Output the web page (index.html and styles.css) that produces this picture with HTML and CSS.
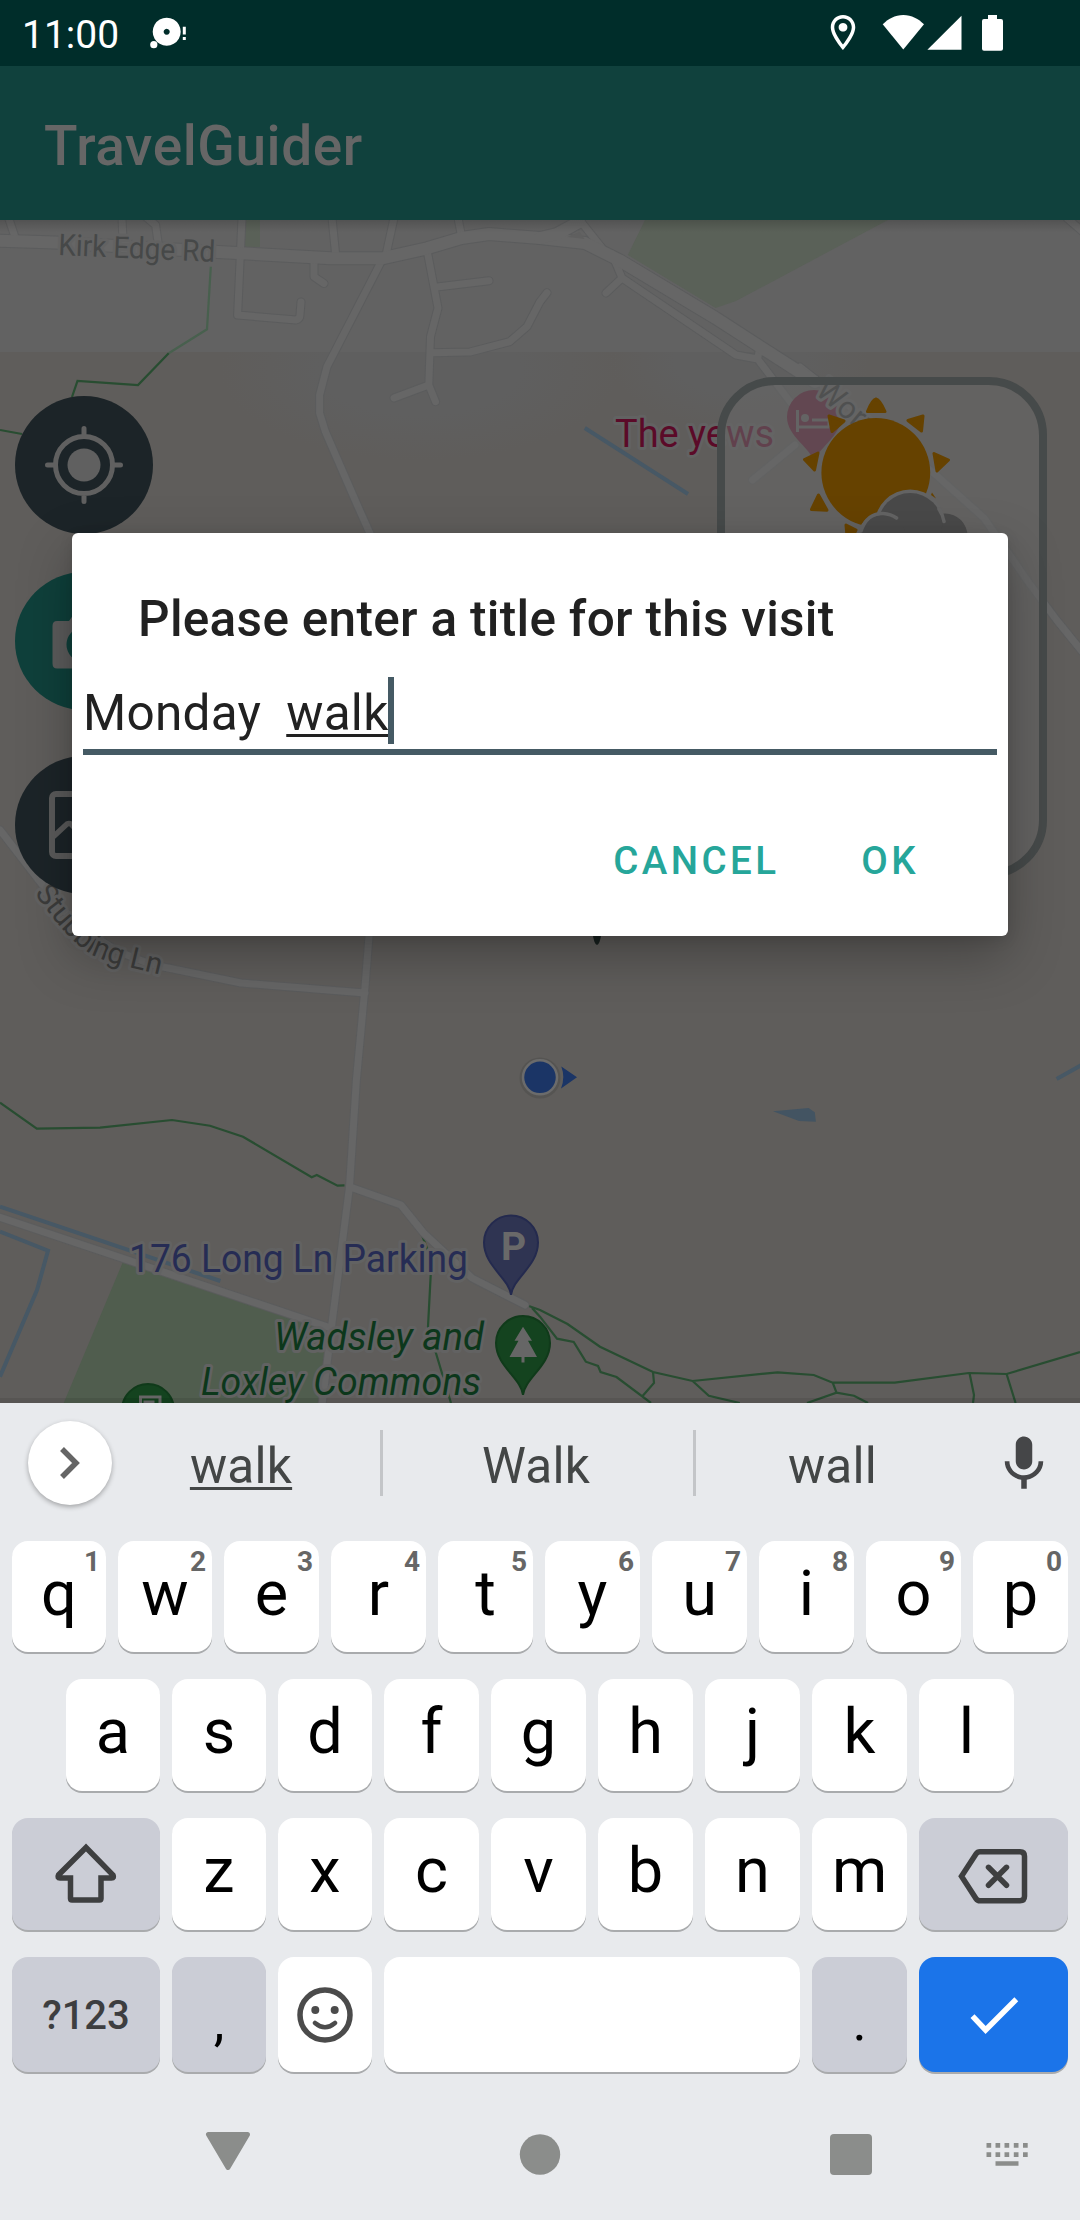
FILE: index.html
```html
<!DOCTYPE html>
<html lang="en">
<head>
<meta charset="utf-8">
<title>TravelGuider</title>
<link rel="stylesheet" href="styles.css">
</head>
<body>
<div class="screen">
  <header class="status">
    <span class="clock">11:00</span>
    <svg class="notif" width="38" height="34" viewBox="149 16 38 34">
      <path fill-rule="evenodd" d="M166.7 17.7a14 14 0 1 0 .01 0zM166.7 28.7a3 3 0 1 1-.01 0z"/>
      <circle cx="153.8" cy="44.7" r="3.6"/>
      <path d="M182.8 26.7h3v7.8h-3zM182.8 37h3v3h-3z"/>
    </svg>
    <svg class="system" width="186" height="40" viewBox="820 13 186 40">
      <path transform="translate(822 11.5) scale(1.75)" fill-rule="evenodd" d="M12 2C8.13 2 5 5.13 5 9c0 5.25 7 13 7 13s7-7.75 7-13c0-3.87-3.13-7-7-7zM7 9c0-2.76 2.24-5 5-5s5 2.24 5 5c0 2.88-2.88 7.19-5 9.88C9.92 16.21 7 11.85 7 9zM12 6.5a2.5 2.5 0 1 0 .01 0z"/>
      <path d="M903.3 49.4 882.7 24.3C888 19 895 15 903.3 15s15.300 4 20.700 9.300z"/>
      <path d="M927.4 49.700H961.500V15.700z"/>
      <path d="M988 15h9v4h4q2 0 2 2v27.700q0 2-2 2h-17q-2 0-2-2V21q0-2 2-2h4z"/>
    </svg>
  </header>
  <div class="appbar">TravelGuider</div>

  <main class="map">
    <svg class="tiles" width="1080" height="1183" viewBox="0 220 1080 1183">
      <defs>
        <linearGradient id="barShade" x1="0" y1="0" x2="0" y2="1">
          <stop offset="0" stop-color="#000" stop-opacity=".16"/>
          <stop offset="1" stop-color="#000" stop-opacity="0"/>
        </linearGradient>
        <radialGradient id="town"><stop offset=".5" stop-color="#5f5f5f"/><stop offset="1" stop-color="#5f5f5f" stop-opacity="0"/></radialGradient>
        <g id="minor">
          <path d="M8.600 218 15 237M122 218l1 22M146 217l9.600 8L158 242M242 218l-4.400 97L296 320q4-1 4-5l1-13M332 218l4 40M394 218l-8 37M458 218l3.500 18M314 263v13.700l10 6.800"/>
          <path d="M427 250 438 308l-7.500 28.700L428.800 385l6.800 16.700M428.800 385 394 398M437 287l52-6.300M432 352.700l38-.7 39.700-10.300L527 326.700l13-25 7-9"/>
          <path d="M578 218l24 30M612 254l10 24-16 15M622 278 736 355l21.600 4 2.400-12M757.600 359 791 403M795 445l-42.500 35M1067 218l16 14"/>
          <path d="M382 260 327 366.700l-7.400 28.300v18l5.800 18.700L358 506.700 372 538"/>
          <path d="M0 830 41 883Q90 950 162 966.700L241 983l124 10M369.500 930 365 987l-8.600 93-6.900 106.700L332 1323l-10 82M349.500 1186.700l51.500 18.300 22.600 28L472 1278l53 27M0 1217.300l327 109.400"/>
          <path d="M800 367 936 475l48 43 45 65 27.600 37L1085 655"/>
        </g>
        <g id="major">
          <path d="M0 240.700l55 1.800 158.500 9.200 117.100 6.600H382l45-10 34.500-10.300L489 234l51 4 45 5 34 17 96.600 58 44.400 28.700L815 382"/>
          <path d="M540 238l17-4 22-12"/>
        </g>
      </defs>
      <rect y="220" width="1080" height="132" fill="#626262"/>
      <rect y="352" width="1080" height="1051" fill="#5f5d5b"/>
      <svg y="352" width="1080" height="183" viewBox="0 352 1080 183">
        <ellipse cx="420" cy="370" rx="200" ry="90" fill="url(#town)"/>
        <ellipse cx="740" cy="360" rx="130" ry="70" fill="url(#town)"/>
      </svg>
      <g class="park">
        <path d="M645 220 627.800 255l87.800 53 20.400-7L888 220z"/>
        <path d="M245 220h15v27h-15z"/>
      </g>
      <path class="field" d="M123 1261.700 329 1326.700 318.500 1403H63.700z"/>
      <path class="pond" d="M773 1111.300l35.600-3.300 6.200 4.300 1.100 9.400-16.900-.7z"/>
      <g class="trail">
        <path class="faint" d="M210.800 266.700 207 329.300l-38.300 24"/>
        <path d="M168.700 353.300 138 385l-60.500-4-5.500 16M22 434l-22-4M0 1102.700l36.800 26 63.200-1 72-7.700 38 5.700 33 11 68.700 40.600 5.100-2.300 20.700 10.700 7-.4M422 1235l9.500 25-3.500 66.700L451 1403M526 1305l14 5 27.500 14 32.500 22.700L653 1372l39.600 9 85-8.700 36.200 2.700 18.900 7.700h62l74.100-9.700 37.800 1 73.400-22M532 1308l8 8.700 17 22 16.700 3.300 12.100 19.700 12.200 4.300 2.600 6 15.900 5L651 1403M653 1372l1 11-11.400 13M692.600 1381l16.200 14.700 31 7.300M832.700 1382.700l3.800 10M807 1403l29.500-10.300 17.500 3 14 7.300M969.500 1373l4.500 22-1 8M1006.600 1374l9 29"/>
      </g>
      <g class="stream">
        <path d="M584.800 428 688 494M0 1206.700 220.400 1281M0 1231.700l48 19-11 39.300-37 86.700M1056.600 1079l25-14"/>
      </g>
      <use href="#minor" class="casing"/><use href="#major" class="casing wide"/>
      <use href="#minor" class="road"/><use href="#major" class="road wide"/>
      <path d="M567.500 237l12-5 5 7z" fill="#5f5f5f"/>

      <path d="M814 463C812 448 787 437 787 417a27 27 0 0 1 54 0C841 437 817 448 814 463z" fill="#5c1a33"/>
      <path d="M797.500 410v22M797.500 427h32M812 420h17v7" fill="none" stroke="#626262" stroke-width="3"/><circle cx="805" cy="418" r="4" fill="#626262"/>
      <g class="label">
        <text x="58" y="255" transform="rotate(2.500 58 255)" font-size="30" textLength="157" lengthAdjust="spacingAndGlyphs" fill="#464848">Kirk Edge Rd</text>
        <path id="stub" d="M34 893C54 920 70 941 92 955 112 965 140 969 185 981" fill="none" stroke="none"/>
        <text font-size="29.500" fill="#3c3c3b"><textPath href="#stub">Stubbing Ln</textPath></text>
        <text x="814" y="393" transform="rotate(40 814 393)" font-size="31" fill="#2e3131">Worr</text>
        <text x="615" y="446.700" font-size="39.500" textLength="159" lengthAdjust="spacingAndGlyphs" fill="#5b0a28">The yews</text>
        <text x="129" y="1272.300" font-size="39.500" textLength="339" lengthAdjust="spacingAndGlyphs" fill="#262c54">176 Long Ln Parking</text>
        <g font-style="italic" font-size="39.500" fill="#0c371b">
          <text x="274" y="1350" textLength="210" lengthAdjust="spacingAndGlyphs">Wadsley and</text>
          <text x="201" y="1395" textLength="280" lengthAdjust="spacingAndGlyphs">Loxley Commons</text>
        </g>
      </g>
      <path d="M511 1295C509 1278 484 1266 484 1242.500a27 27 0 0 1 54 0C538 1266 513 1278 511 1295z" fill="#2f3452" stroke="#242a4e" stroke-width="2"/>
      <text x="513.500" y="1259.500" font-size="39" font-weight="700" text-anchor="middle" fill="#696969">P</text>
      <g fill="#14431f" stroke="#103a1a" stroke-width="2">
        <path d="M523 1395C521 1378 496 1366 496 1343a27 27 0 0 1 54 0C550 1366 525 1378 523 1395z"/>
        <circle cx="148" cy="1410" r="26"/>
      </g>
      <path d="M523 1326.700l9 14h-4l9 16.300H524.500v5.500h-3V1357H509.500l9-16.300h-4z" fill="#666"/>
      <path d="M140.500 1403v-6H160v6M145 1404v-2h8v2" fill="none" stroke="#666" stroke-width="3"/>

      <circle cx="540" cy="1078" r="20.500" fill="#555452"/>
      <circle cx="540" cy="1077.300" r="17" fill="#1b3566" stroke="#6b6b6b" stroke-width="2.500"/>
      <path d="M561.300 1066.500 577 1077.300 561 1088.500Q565.500 1077.300 561.300 1066.500z" fill="#1b3566"/>
      <path d="M592.700 934h8.600Q600 944 597 945 594 944 592.700 934z" fill="#18211f"/>
      <rect y="220" width="1080" height="12" fill="url(#barShade)"/>
      <rect y="1398" width="1080" height="5" fill="#000" opacity=".08"/>
    </svg>

    <div class="weather">
      <svg width="314" height="180" viewBox="725 385 314 180">
        <g fill="#664200" stroke="#664200" stroke-width="3" stroke-linejoin="round">
          <path d="M867.500 411.500h17.500Q880 400 876 399 872 400 867.500 411.500zM908 420.500l15-4.500-1.500 15zM829 416l15 5-12 10.500zM818 453l-13.500 6.500 10 10.500zM934 453.500l14.500 6.500-11.500 11zM818.500 495l-7 14.500 15.500.7zM846 525l10 5-3 6h-6z"/>
        </g>
        <path d="M932 492.500l4 6-5-3.500z" fill="#664200"/>
        <circle cx="875.800" cy="472.500" r="54.400" fill="#664200"/>
        <circle cx="883" cy="538" r="25.500" fill="#636363"/>
        <circle cx="910.200" cy="525" r="35.500" fill="#636363"/>
        <g fill="#494949"><circle cx="945" cy="536" r="22.500"/><circle cx="910.200" cy="525" r="32"/><circle cx="883" cy="538" r="23"/></g>
        <path d="M861 531Q867 513 883 513.500q8 .5 13.500 4.500M939 509q4 6 5 12.500" fill="none" stroke="#636363" stroke-width="3.600" stroke-linecap="round"/>
      </svg>
    </div>

    <div class="fabs">
      <div class="fab"><svg width="84" height="84" viewBox="-42 -42 84 84"><circle r="16.500" fill="#606060"/><path d="M28.500 0a28.500 28.500 0 1 1-57 0a28.500 28.500 0 1 1 57 0M0-36.500v8M0 36.500v-8M-36.500 0h8M36.500 0h-8" fill="none" stroke="#606060" stroke-width="5" stroke-linecap="round"/></svg></div>
      <div class="fab teal"><svg width="84" height="84" viewBox="-42 -42 84 84"><path fill="#5c5c5c" fill-rule="evenodd" d="M-27-20h12l5-7h20l5 7h12q4.500 0 4.500 5v37.500q0 5-4.500 5h-54q-4.500 0-4.500-5V-15q0-5 4.500-5zM0-14a17.500 17.500 0 1 0 .01 0z"/></svg></div>
      <div class="fab"><svg width="84" height="84" viewBox="-42 -42 84 84"><rect x="-32" y="-31" width="64" height="62" rx="4" fill="none" stroke="#5a5a5a" stroke-width="6"/><path d="M-31 12-17-1q2-1 4 0L15 28" fill="none" stroke="#5a5a5a" stroke-width="5.500"/></svg></div>
    </div>

    <section class="dialog">
      <h1>Please enter a title for this visit</h1>
      <div class="field-input"><span>Monday  <u>walk</u></span><i class="caret"></i></div>
      <div class="actions"><span>CANCEL</span><span>OK</span></div>
    </section>
  </main>

  <section class="keyboard">
    <div class="suggest">
      <div class="more"><svg width="24" height="36" viewBox="0 0 24 36"><path d="M4 4l14 14L4 32" fill="none" stroke="#656565" stroke-width="5.500"/></svg></div>
      <span class="word"><u>walk</u></span><i class="bar"></i>
      <span class="word">Walk</span><i class="bar"></i>
      <span class="word">wall</span>
      <svg class="mic" width="66" height="66" viewBox="0 0 24 24"><path d="M12 14c1.660 0 3-1.340 3-3V5c0-1.660-1.340-3-3-3S9 3.340 9 5v6c0 1.660 1.340 3 3 3zM17.300 11c0 3-2.540 5.100-5.300 5.100S6.700 14 6.700 11H5c0 3.410 2.720 6.230 6 6.720V21h2v-3.280c3.280-.48 6-3.300 6-6.720z"/></svg>
    </div>
    <div class="row first">
      <div class="key thin">q<sup>1</sup></div><div class="key thin">w<sup>2</sup></div><div class="key">e<sup>3</sup></div><div class="key">r<sup>4</sup></div><div class="key">t<sup>5</sup></div><div class="key">y<sup>6</sup></div><div class="key">u<sup>7</sup></div><div class="key">i<sup>8</sup></div><div class="key">o<sup>9</sup></div><div class="key">p<sup>0</sup></div>
    </div>
    <div class="row second">
      <div class="key thin">a</div><div class="key thin">s</div><div class="key thin">d</div><div class="key">f</div><div class="key">g</div><div class="key">h</div><div class="key">j</div><div class="key">k</div><div class="key">l</div>
    </div>
    <div class="row">
      <div class="key side"><svg width="66" height="66" viewBox="0 0 66 66"><path d="M33 6.500 5.500 34q-1.500 3 1.500 3H17.500V57.500q0 1.500 1.500 1.500H46.500q1.500 0 1.500-1.500V37H58.500q3 0 1.500-3z" fill="none" stroke="#3e3f40" stroke-width="5.500"/></svg></div>
      <div class="key thin">z</div><div class="key thin">x</div><div class="key">c</div><div class="key">v</div><div class="key">b</div><div class="key">n</div><div class="key">m</div>
      <div class="key side end"><svg width="80" height="66" viewBox="0 0 80 66"><path d="M7.500 35.300 22 13q1.500-2.200 4-2.200H66q4.500 0 4.500 4.500v40q0 4.500-4.500 4.500H26q-2.500 0-4-2.200zM34.500 26.300l18 18M52.500 26.300l-18 18" fill="none" stroke="#3e3f40" stroke-width="5.500" stroke-linecap="round"/></svg></div>
    </div>
    <div class="row last">
      <div class="key side sym">?123</div>
      <div class="key thin gray punct">,</div>
      <div class="key thin"><svg width="58" height="58" viewBox="-29 -29 58 58"><g fill="none" stroke="#4b4b4b" stroke-linecap="round"><circle r="25" stroke-width="5.500"/><path d="M-10 8q10 8.500 20 0" stroke-width="4.500"/></g><circle cx="-9.700" cy="-5" r="4" fill="#4b4b4b"/><circle cx="9.700" cy="-5" r="4" fill="#4b4b4b"/></svg></div>
      <div class="key space"></div>
      <div class="key gray punct">.</div>
      <div class="key side end enter"><svg width="56" height="44" viewBox="965 1992 56 44"><path d="M971.500 2015.200 984.600 2029 1015.300 1998.300" fill="none" stroke="#fff" stroke-width="5.500"/></svg></div>
    </div>
  </section>
  <nav class="nav">
    <svg width="46" height="41" viewBox="0 0 46 41"><path d="M3.500 3.500h39L23 36.500z" stroke="#8b8d8b" stroke-width="5" stroke-linejoin="round"/></svg>
    <svg width="42" height="41" viewBox="0 0 42 41"><circle cx="21" cy="20.500" r="20.200"/></svg>
    <svg width="42" height="41" viewBox="0 0 42 41"><rect width="42" height="41" rx="4"/></svg>
    <svg width="43" height="24" viewBox="985.500 2143 43 24"><path d="M986 2143h4.700v4.700h-4.700zM995 2143h4.700v4.700h-4.700zM1004 2143h4.700v4.700h-4.700zM1013.300 2143h4.700v4.700h-4.700zM1022.500 2143h4.700v4.700h-4.700zM986 2152.300h4.700v4.700h-4.700zM995 2152.300h4.700v4.700h-4.700zM1004 2152.300h4.700v4.700h-4.700zM1013.300 2152.300h4.700v4.700h-4.700zM1022.500 2152.300h4.700v4.700h-4.700zM995 2161.300h23v4.500h-23z"/></svg>
  </nav>
</div>
</body>
</html>
```
FILE: styles.css
```css
* { box-sizing: border-box; }
body { margin: 0; font-family: Roboto, "Liberation Sans", sans-serif; }
svg { display: block; flex: none; }

.screen {
  width: 1080px;
  height: 2220px;
  display: flex;
  flex-direction: column;
  overflow: hidden;
  background: #e8eaed;
}

.status {
  height: 66px;
  display: flex;
  align-items: flex-start;
  background: #002d2a;
  color: #fff;
}
.status svg { fill: #fff; }
.clock { width: 149px; padding-left: 22px; font-size: 39px; line-height: 70px; }
.notif { margin-top: 16px; }
.system { margin: 13px 74px 0 auto; }

.appbar {
  height: 154px;
  padding-left: 44px;
  background: #10413d;
  color: #666;
  font-size: 55px;
  font-weight: 500;
  letter-spacing: .6px;
  line-height: 154px;
  padding-top: 3px;
}

.map { position: relative; height: 1183px; flex: none; }
.park { fill: #5a6158; }
.field { fill: #505d4e; }
.pond { fill: #435462; }
.trail { fill: none; stroke: #284d31; stroke-width: 2.2; }
.trail .faint { stroke: #48604e; }
.stream { fill: none; stroke: #475865; stroke-width: 4; }
.casing, .road { fill: none; stroke-linejoin: round; stroke-linecap: round; }
.casing { stroke: #5b5c5d; stroke-width: 9px; }
.casing.wide { stroke-width: 14px; }
.road { stroke: #666; stroke-width: 7px; }
.road.wide { stroke-width: 12px; }
.label text { paint-order: stroke; stroke: #626262; stroke-width: 6px; stroke-linejoin: round; }

.weather {
  position: absolute;
  left: 717px;
  top: 157px;
  width: 330px;
  height: 501px;
  border: 8px solid #464a4a;
  border-radius: 58px;
  background: rgba(102, 102, 102, .6);
  background-clip: padding-box;
}

.fabs {
  position: absolute;
  left: 15px;
  top: 176px;
  display: flex;
  flex-direction: column;
}
.fab {
  width: 138px;
  height: 138px;
  border-radius: 50%;
  display: flex;
  align-items: center;
  justify-content: center;
  background: #1c2428;
}
.fab.teal { margin: 38px 0 46px; background: #0f403b; }

.dialog {
  position: absolute;
  left: 72px;
  top: 313px;
  width: 936px;
  height: 403px;
  padding: 56px 11px 0;
  border-radius: 6px;
  background: #fff;
  color: #212121;
  box-shadow: 0 20px 54px rgba(0, 0, 0, .28), 0 4px 14px rgba(0, 0, 0, .1);
}
.dialog h1 {
  margin: 0;
  padding-left: 55px;
  font-size: 49.5px;
  font-weight: 500;
  letter-spacing: .3px;
  line-height: 60px;
}
.field-input {
  display: flex;
  height: 106px;
  padding-top: 28px;
  border-bottom: 6px solid #455a64;
  font-size: 49.5px;
  letter-spacing: .25px;
  line-height: 72px;
  white-space: pre;
}
u { text-decoration: underline; text-decoration-thickness: 2.5px; text-underline-offset: 4px; text-decoration-skip-ink: none; }
.caret { width: 6px; height: 67px; margin-left: -1px; background: #455a64; }
.actions {
  display: flex;
  justify-content: flex-end;
  gap: 82px;
  padding: 83px 78px 0 0;
  color: #26a69a;
  font-size: 38.5px;
  font-weight: 500;
  letter-spacing: 3.4px;
  line-height: 46px;
}

.keyboard { flex: none; height: 699px; background: #e8eaed; }
.suggest {
  height: 120px;
  display: flex;
  align-items: center;
  padding-left: 28px;
  color: #434646;
  font-size: 49.5px;
  letter-spacing: .25px;
}
.more {
  width: 84px;
  height: 84px;
  border-radius: 50%;
  display: flex;
  align-items: center;
  justify-content: center;
  background: #fff;
  box-shadow: 0 2px 5px rgba(0, 0, 0, .3);
}
.word { width: 268px; text-align: center; padding: 5px 10px 0 0; }
.word + .bar + .word { width: 310px; padding-right: 4px; }
.word + .bar + .word + .bar + .word { width: 271px; padding: 5px 0 0 2px; }
.bar { width: 3px; height: 66px; background: #c3c5c8; }
.mic { margin-left: 24px; margin-top: 1px; fill: #454648; }

.row {
  display: flex;
  gap: 12px;
  padding: 0 12px;
  margin-bottom: 27px;
}
.row.second { padding-left: 66px; }
.first { margin-top: 18px; }
.key {
  position: relative;
  width: 95px;
  height: 112px;
  padding-bottom: 6px;
  border-radius: 16px;
  background: #fff;
  color: #000;
  font-size: 63px;
  line-height: 106px;
  text-align: center;
  box-shadow: 0 2px 0 #a9abad;
}
.key.thin { width: 94px; }
.first .key { height: 111px; }
.last .key { height: 115px; }
.key:has(svg) { display: flex; align-items: center; justify-content: center; padding: 0; }
.key sup {
  position: absolute;
  top: 5px;
  right: 6px;
  font-size: 28px;
  font-weight: 700;
  line-height: 32px;
  color: #666;
}
.key.side { width: 148px; background: #cbcdd6; }
.key.end { width: 149px; }
.key.gray { background: #cbcdd6; }
.key.space { width: 416px; }
.key.enter { background: #1b74e9; }
.key.sym { font-size: 40px; font-weight: 500; line-height: 118px; color: #3d3e40; }
.key.punct { font-size: 54px; line-height: 129px; }

.nav { display: flex; align-items: flex-start; padding-left: 205px; fill: #8b8d8b; }
.nav svg { margin-top: 32px; }
.nav svg:nth-child(1) { margin-top: 29px; }
.nav svg:nth-child(2) { margin-left: 268px; }
.nav svg:nth-child(3) { margin-left: 269px; }
.nav svg:nth-child(4) { margin-left: 114px; margin-top: 41px; }
```
